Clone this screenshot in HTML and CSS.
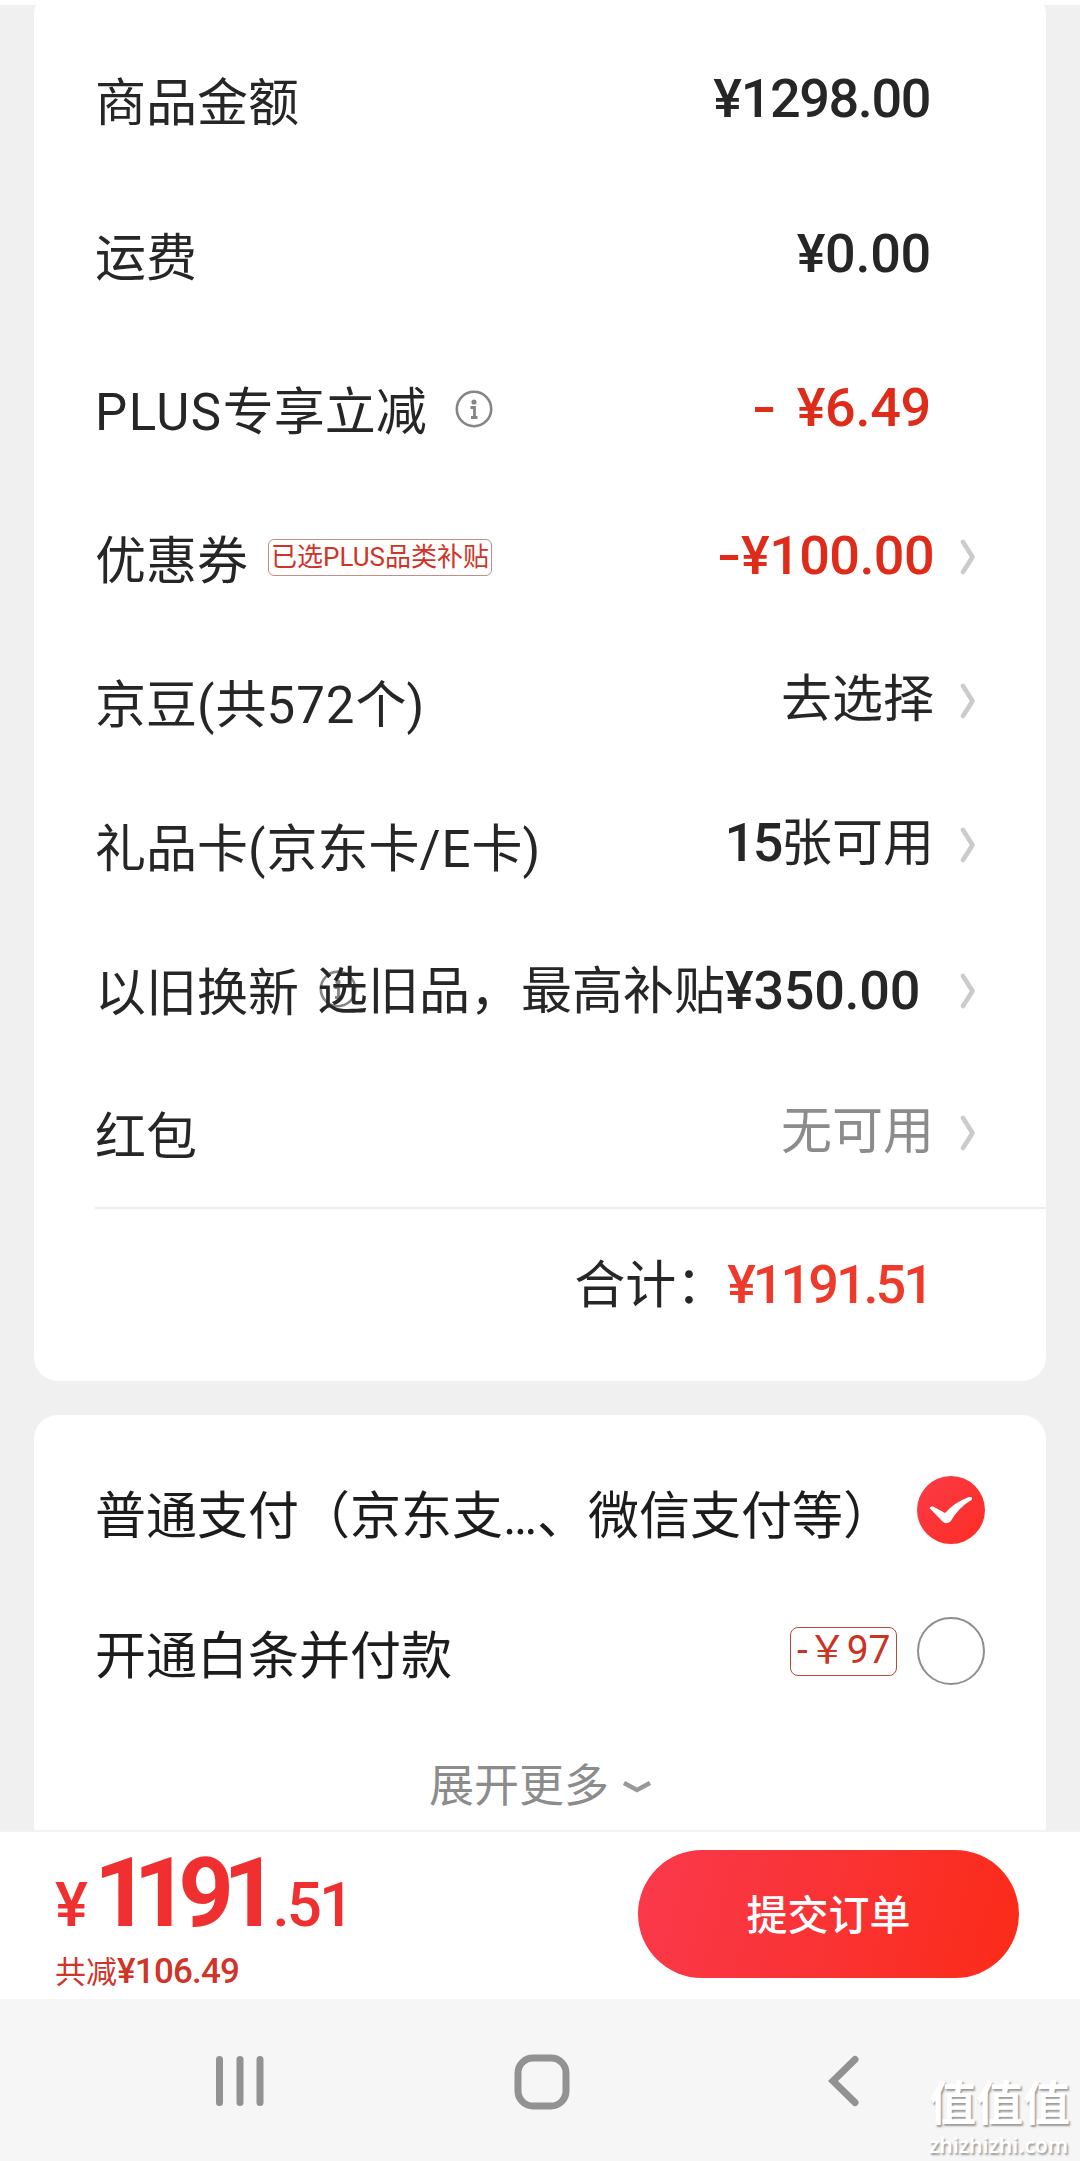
FILE: index.html
```html
<!DOCTYPE html>
<html lang="zh-CN">
<head>
<meta charset="utf-8">
<title>提交订单</title>
<link rel="stylesheet" href="styles.css">
</head>
<body>
<svg class="defs" width="0" height="0">
  <symbol id="info" viewBox="0 0 38 38"><circle cx="19" cy="19" r="17.2" fill="none" stroke="#858585" stroke-width="2.6"/><circle cx="19" cy="12" r="2.6" fill="#858585"/><path d="M15.5 17.500h4v9.500M16 27.500h6.500" fill="none" stroke="#858585" stroke-width="2.8"/></symbol>
  <symbol id="chev" viewBox="0 0 16 36"><path d="M3 3L12.5 18L3 33" fill="none" stroke="#cbcbcb" stroke-width="4.600" stroke-linecap="round" stroke-linejoin="round"/></symbol>
</svg>
<div class="screen">
  <main class="content">
    <section class="card summary">
      <div class="row"><span class="label">商品金额</span><span class="value price long">¥1298.00</span></div>
      <div class="row"><span class="label">运费</span><span class="value price short">¥0.00</span></div>
      <div class="row row-plus"><span class="label"><span class="latin">PLUS</span>专享立减</span><svg class="info"><use href="#info"/></svg><span class="value price short red"><span class="minus apart">-</span>¥6.49</span></div>
      <div class="row link coupon"><span class="label">优惠券</span><span class="tag">已选PLUS品类补贴</span><span class="value price red"><span class="minus">-</span>¥100.00</span><svg class="chev"><use href="#chev"/></svg></div>
      <div class="row link"><span class="label">京豆<span class="num">(</span>共<span class="num">572</span>个)</span><span class="value">去选择</span><svg class="chev"><use href="#chev"/></svg></div>
      <div class="row link"><span class="label">礼品卡<span class="num">(</span>京东卡<span class="num">/E</span>卡)</span><span class="value"><span class="price count">15</span>张可用</span><svg class="chev"><use href="#chev"/></svg></div>
      <div class="row link trade"><span class="label">以旧换新</span><svg class="info"><use href="#info"/></svg><span class="value">选旧品，最高补贴<span class="price">¥350.00</span></span><svg class="chev"><use href="#chev"/></svg></div>
      <div class="row link"><span class="label">红包</span><span class="value muted">无可用</span><svg class="chev"><use href="#chev"/></svg></div>
      <div class="total"><span>合计：</span><span class="price">¥1191.51</span></div>
    </section>
    <section class="card pay">
      <div class="option"><span class="label">普通支付（京东支…、微信支付等）</span>
        <svg class="radio" viewBox="0 0 68 68"><defs><linearGradient id="r" x1="0" y1="0" x2="1" y2="1"><stop offset="0" stop-color="#fb3b48"/><stop offset="1" stop-color="#fd2c22"/></linearGradient></defs><circle cx="34" cy="34" r="34" fill="url(#r)"/><path d="M12.5 32Q15 29.500 18 31.500L28 37Q38 26 52 21Q56.500 20.500 54.500 24Q42 31 33.500 45.500Q29 49 25.500 45.500Z" fill="#fff"/></svg></div>
      <div class="option"><span class="label">开通白条并付款</span><span class="cut">-￥97</span>
        <svg class="radio" viewBox="0 0 68 68"><circle cx="34" cy="34" r="33" fill="none" stroke="#8e8e8e" stroke-width="2"/></svg></div>
      <div class="more"><span>展开更多</span><svg width="28" height="14" viewBox="0 0 28 14"><path d="M1 3L14 10L27 3" fill="none" stroke="#999" stroke-width="4.500"/></svg></div>
    </section>
  </main>
  <footer class="bar">
    <div class="sum">
      <div class="big"><span class="unit">¥</span><span class="int"><span class="one">1</span>191</span><span class="unit cents">.51</span></div>
      <div class="saved">共减<span class="price">¥106.49</span></div>
    </div>
    <div class="submit">提交订单</div>
  </footer>
  <nav class="nav">
    <svg width="50" height="54" viewBox="0 0 50 54"><path d="M4.500 5.500V48.500M25 5.500V48.500M45 5.500V48.500" stroke="#929292" stroke-width="7" stroke-linecap="round"/></svg>
    <svg width="56" height="56" viewBox="0 0 56 56"><rect x="4" y="4" width="48" height="48" rx="15" fill="none" stroke="#929292" stroke-width="7"/></svg>
    <svg width="34" height="54" viewBox="0 0 34 54"><path d="M29 5.500L7 27L29 48.500" fill="none" stroke="#929292" stroke-width="7" stroke-linecap="round"/></svg>
    <div class="mark"><div class="mark-name">值值值</div><div class="mark-url">zhizhizhi.com</div></div>
  </nav>
</div>
</body>
</html>
```
FILE: styles.css
```css
* { box-sizing: border-box; }
body { margin: 0; background: #f0f0f0; color: #262626; font: 51px/60px Roboto, "Noto Sans CJK SC", sans-serif; }
.defs { display: block; position: absolute; }
.screen { width: 1080px; height: 2161px; display: flex; flex-direction: column; overflow: hidden; }
.content { height: 1830px; border-top: 5px solid #fff; overflow: hidden; padding: 0 34px; }
.card { background: #fff; border-radius: 24px; white-space: nowrap; }
.summary { height: 1391px; margin-top: -15px; padding: 36px 0 0 61px; }
.row { display: flex; align-items: center; height: 155px; padding-right: 116px; }
.row-plus { height: 154px; }
.link { height: 144px; padding-right: 70px; }
.latin { letter-spacing: 1.5px; }
.num { letter-spacing: 1px; }
.value { margin-left: auto; margin-bottom: 10px; }
.link .value { margin-bottom: 13px; margin-right: 26px; }
.price { font-size: 54px; font-weight: 500; letter-spacing: -1px; }
.long { letter-spacing: -1.4px; }
.short { letter-spacing: -.3px; margin-right: -1px; }
.count { letter-spacing: -2.5px; }
.red { color: #df2b19; }
.muted { color: #8c8c8c; }
.minus { display: inline-block; transform: scaleX(1.3); }
.apart { margin-right: 24px; }
.coupon .price { letter-spacing: -.6px; }
.coupon .minus { margin-right: 3px; }
.info { width: 38px; height: 38px; flex: none; margin: 0 0 9px 28px; }
.chev { width: 16px; height: 36px; flex: none; margin-bottom: 10px; }
.tag { font-size: 26px; line-height: 35px; height: 37px; padding: 0 2px; margin: 0 0 10px 20px; border: 1px solid #c09088; border-radius: 6px; color: #d03427; }
.trade .info { margin: 0 -42px 11px 20px; }
.trade .value { margin: 0 0 6px 2px; z-index: 1; }
.trade .price { letter-spacing: -.3px; }
.trade .chev { margin-left: auto; margin-bottom: 6px; }
.total { border-top: 2px solid #ededed; margin-top: -3px; height: 140px; padding: 42px 116px 0 0; display: flex; justify-content: flex-end; align-items: baseline; }
.total .price { color: #ee3a2b; letter-spacing: -3px; margin-right: -1px; padding-top: 2px; line-height: 64px; }
.pay { height: 500px; margin-top: 34px; padding: 32px 61px 0 61px; color: #1c1c1c; }
.option { display: flex; align-items: center; height: 140px; }
.radio { width: 68px; height: 68px; flex: none; margin: 0 0 14px auto; }
.cut { font-size: 39px; line-height: 45px; height: 49px; padding: 0 5.5px; margin: 0 20px 12px auto; border: 1.5px solid #b5493c; border-radius: 8px; color: #c93423; }
.cut + .radio { margin-left: 0; margin-bottom: 13px; }
.more { display: flex; align-items: center; justify-content: center; gap: 14px; margin-top: 30px; font-size: 45px; color: #8c8c8c; }
.bar { height: 169px; background: #fff; border-top: 2px solid #f3f3f3; display: flex; justify-content: space-between; padding: 18px 61px 0 55px; }
.sum { white-space: nowrap; padding-top: 2px; }
.big { color: #ef2f30; font-weight: 500; height: 84px; line-height: 82px; }
.unit { font-size: 62px; }
.int { font-size: 97px; letter-spacing: -11px; font-weight: 700; margin-left: 6px; }
.one { letter-spacing: -16px; }
.cents { letter-spacing: -3px; margin-left: 5px; }
.saved { font-size: 31px; line-height: 40px; margin-top: 16px; color: #cf3529; }
.saved .price { font-size: 35px; letter-spacing: -.8px; }
.submit { width: 381px; height: 128px; border-radius: 64px; background: linear-gradient(105deg, #fa394c, #f93336 45%, #fc2b18); color: #fff; font-size: 41px; font-weight: 500; line-height: 133px; text-align: center; }
.nav { flex: 1; background: #f6f6f6; position: relative; display: flex; padding: 55px 0 0 215px; }
.nav svg { flex: none; }
.nav svg:nth-child(2) { margin-left: 249px; }
.nav svg:nth-child(3) { margin-left: 256px; }
.mark { position: absolute; right: 9px; bottom: 3px; width: 142px; color: #fff; text-shadow: 1.5px 1.5px 2px #999; white-space: nowrap; }
.mark-name { font-size: 47px; font-weight: 700; line-height: 54px; }
.mark-url { font: 600 21.200px/27px "Noto Sans", sans-serif; }
```
